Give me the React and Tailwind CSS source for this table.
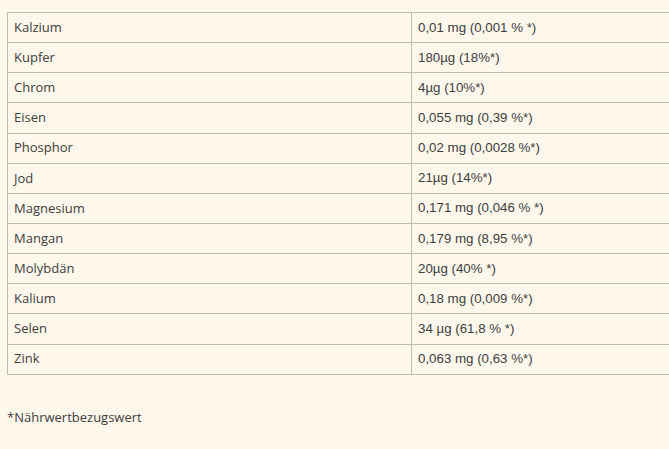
import React from 'react';

const rows = [
  ['Kalzium', '0,01 mg (0,001 % *)'],
  ['Kupfer', '180µg (18%*)'],
  ['Chrom', '4µg (10%*)'],
  ['Eisen', '0,055 mg (0,39 %*)'],
  ['Phosphor', '0,02 mg (0,0028 %*)'],
  ['Jod', '21µg (14%*)'],
  ['Magnesium', '0,171 mg (0,046 % *)'],
  ['Mangan', '0,179 mg (8,95 %*)'],
  ['Molybdän', '20µg (40% *)'],
  ['Kalium', '0,18 mg (0,009 %*)'],
  ['Selen', '34 µg (61,8 % *)'],
  ['Zink', '0,063 mg (0,63 %*)'],
];

export default function App() {
  return (
    <div className="w-[669px] h-[449px] overflow-hidden bg-[#fdf7ec] text-[#404040] font-['Open_Sans',sans-serif]">
      <div className="pt-3 pl-[7px]">
        <table className="w-[808px] border-collapse table-fixed text-[13px]">
          <tbody>
            {rows.map(([name, value]) => (
              <tr key={name} className="h-[30.15px]">
                <td className="border border-[#c2bcae] px-[6px] py-0 align-middle w-[404px]">{name}</td>
                <td className="border border-[#c2bcae] px-[6px] py-0 align-middle text-[13.3px] font-['Liberation_Sans',sans-serif]">{value}</td>
              </tr>
            ))}
          </tbody>
        </table>
        <p className="mt-[33px] text-[13px]">*Nährwertbezugswert</p>
      </div>
    </div>
  );
}
